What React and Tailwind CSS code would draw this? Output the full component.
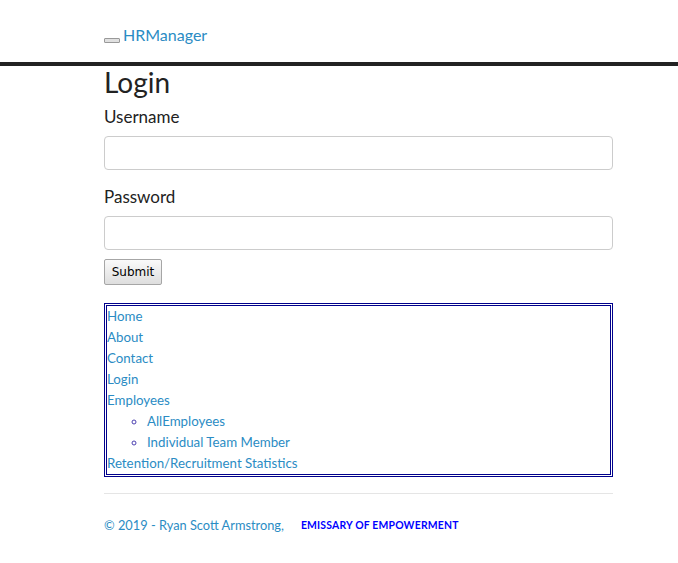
import React from "react";

const link = "text-[#2b8cc4]";

export default function App() {
  return (
    <div className="min-h-[563px] bg-white font-['Lato','Liberation_Sans',sans-serif] text-[#222]">
      <header className="h-[62px] border-b-4 border-[#222] box-content">
        <div className="ml-[104px] flex items-end pt-[25px]">
          <button className="mb-[2px] mr-[3px] h-[5px] w-[16px] rounded-[1px] border border-[#999] bg-[#e0e0e0]" />
          <a className={`${link} text-[16px] leading-[20px]`}>HRManager</a>
        </div>
      </header>
      <main className="ml-[104px] w-[509px]">
        <h1 className="mt-[1px] text-[28px] leading-[31px]">Login</h1>
        <form className="flex flex-col">
          <label className="mt-[7px] text-[17px] leading-[24px]">Username</label>
          <input className="mt-[7px] h-[34px] rounded-[4px] border border-[#ccc]" />
          <label className="mt-[15px] text-[17px] leading-[24px]">Password</label>
          <input className="mt-[7px] h-[34px] rounded-[4px] border border-[#ccc]" />
          <div className="mt-[9px] flex">
            <button
              type="button"
              className="block h-[26px] w-[58px] rounded-[2px] border border-[#a6a6a6] bg-gradient-to-b from-[#fafafa] to-[#dedede] text-[12px] text-black font-['DejaVu_Sans','Liberation_Sans',sans-serif]"
            >
              Submit
            </button>
          </div>
        </form>
        <nav className="mt-[18px] border-[3px] border-double border-[#00008b]">
          <ul className={`${link} text-[13.3px] leading-[21px]`}>
            <li><a>Home</a></li>
            <li><a>About</a></li>
            <li><a>Contact</a></li>
            <li><a>Login</a></li>
            <li>
              <a>Employees</a>
              <ul className="list-[circle] pl-[40px] marker:text-[#4b3fb0]">
                <li><a>AllEmployees</a></li>
                <li><a>Individual Team Member</a></li>
              </ul>
            </li>
            <li><a>Retention/Recruitment Statistics</a></li>
          </ul>
        </nav>
        <hr className="mt-[16px] border-t border-[#e5e5e5]" />
        <footer className="mt-[21px] flex items-center text-[12.8px] leading-[20px]">
          <span className={link}>© 2019 - Ryan Scott Armstrong,</span>
          <span className="ml-[17px] text-[10.4px] font-bold text-[#0000ff] tracking-[0.2px]">
            EMISSARY OF EMPOWERMENT
          </span>
        </footer>
      </main>
    </div>
  );
}
